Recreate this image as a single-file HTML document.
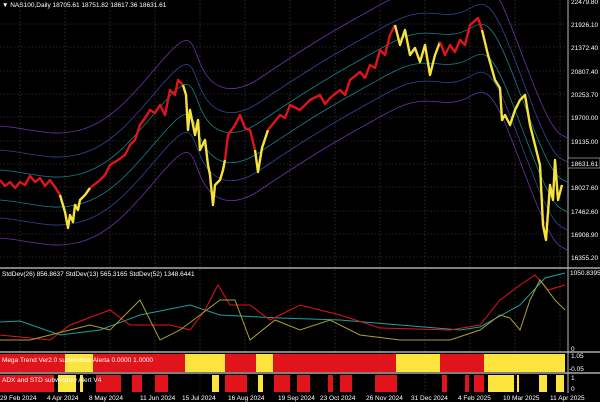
<!DOCTYPE html>
<html><head><meta charset="utf-8"><style>
html,body{margin:0;padding:0;background:#000;width:600px;height:402px;overflow:hidden}
svg{display:block}
text{font-family:"Liberation Sans",sans-serif;font-size:6.5px;fill:#fff}
</style></head><body>
<svg width="600" height="402" viewBox="0 0 600 402">
<defs>
<path id="mid" fill="none" d="M0,188 C30,190 50,200 80,192 S130,160 160,125 S190,100 200,125 S230,160 260,140 S320,100 360,78 S410,48 440,52 S475,35 488,45 S515,100 535,150 S560,195 567,200"/>
</defs>
<rect width="600" height="402" fill="#000"/>
<g stroke="#4a4a4a" stroke-width="0.6" stroke-dasharray="1.5,2">
<path d="M0,24H567M0,47H567M0,71H567M0,94H567M0,117H567M0,141H567M0,164H567M0,187H567M0,211H567M0,234H567M0,257H567"/>
<path d="M20,0V393M65,0V393M110,0V393M155,0V393M200,0V393M245,0V393M290,0V393M335,0V393M380,0V393M425,0V393M470,0V393M515,0V393M560,0V393"/>
</g>
<g fill="none" stroke-width="0.8">
<use href="#mid" stroke="#6a34a8" transform="translate(0,-62)"/>
<use href="#mid" stroke="#33449a" transform="translate(0,-38)"/>
<use href="#mid" stroke="#18808a" transform="translate(0,-18)"/>
<use href="#mid" stroke="#18808a" transform="translate(0,12)"/>
<use href="#mid" stroke="#33449a" transform="translate(0,30)"/>
<use href="#mid" stroke="#6a34a8" transform="translate(0,50)"/>
</g>
<g fill="none" stroke-width="2.4" stroke-linejoin="round">
<polyline stroke="#e0141a" points="0,180 5,186 10,182 15,188 20,182 25,185 30,176 35,182 40,178 45,186 50,180 55,187 60,195"/>
<polyline stroke="#f5e23c" points="60,195 65,212 68,228 70,215 73,222 75,205 78,210 80,200 85,195 90,188"/>
<polyline stroke="#e0141a" points="90,188 100,180 105,175 110,165 118,160 125,155 130,145 135,140 140,125 145,118 150,110 155,113 160,105 165,115 170,90 175,95 178,80 183,85"/>
<polyline stroke="#f5e23c" points="183,85 186,95 188,130 190,110 195,135 198,120 200,150 205,140 208,165 210,175 213,205 215,185 220,180 223,170 225,160"/>
<polyline stroke="#e0141a" points="225,160 228,135 235,125 240,115 245,128 250,130 255,150"/>
<polyline stroke="#f5e23c" points="255,150 258,172 262,148 268,130"/>
<polyline stroke="#e0141a" points="268,130 280,115 285,118 290,105 300,110 310,100 320,95 325,104 330,98 340,90 345,95 350,80 360,72 365,78 370,65 375,68 380,50 385,55 390,35 395,25"/>
<polyline stroke="#f5e23c" points="395,25 400,45 405,30 410,55 415,48 420,62 425,45 430,75 435,55 440,42"/>
<polyline stroke="#e0141a" points="440,42 445,55 450,45 455,52 460,40 465,45 470,25 478,18 482,30"/>
<polyline stroke="#f5e23c" points="482,30 488,55 490,62 495,80 500,88 502,120 505,115 510,125 515,110 520,100 525,95 530,125 535,145 540,165 543,225 546,240 550,185 553,200 555,160 558,200 562,185"/>
</g>
<text x="2" y="7">▼ NAS100,Daily  18705.61 18751.82 18617.36 18631.61</text>
<line x1="568" y1="0" x2="568" y2="393" stroke="#bbb" stroke-width="1"/>
<g>
<text x="571" y="4">22479.80</text><text x="571" y="27">21926.10</text><text x="571" y="50">21372.40</text>
<text x="571" y="74">20807.40</text><text x="571" y="97">20253.70</text><text x="571" y="120">19700.00</text>
<text x="571" y="144">19135.00</text>
<rect x="568" y="158" width="32" height="10" fill="#000" stroke="#ccc" stroke-width="0.6"/>
<text x="571" y="166">18631.61</text>
<text x="571" y="190">18027.60</text><text x="571" y="214">17462.60</text><text x="571" y="237">16908.90</text>
<text x="571" y="260">16355.20</text>
</g>
<g stroke="#aaa" stroke-width="1.5"><path d="M0,268H600M0,352H600M0,373H600"/></g>
<text x="2" y="276">StdDev(26) 856.8637  StdDev(13) 565.3165  StdDev(52) 1348.6441</text>
<text x="570" y="275">1050.8395</text>
<text x="571" y="351">0</text>
<g fill="none" stroke-width="1">
<polyline stroke="#1fa0a0" points="0,322 20,321 60,335 100,330 140,315 190,305 220,315 280,318 340,320 400,325 460,330 480,327 520,305 545,278 565,273"/>
<polyline stroke="#e0141a" points="0,335 50,340 70,325 110,310 130,325 170,325 190,330 205,310 218,285 230,305 250,305 270,320 300,305 340,315 380,328 450,330 480,325 500,300 520,285 535,275 548,290 565,285"/>
<polyline stroke="#a8a030" points="0,340 30,340 70,330 90,325 110,330 140,300 160,340 180,330 200,315 220,300 235,300 250,340 275,320 300,330 330,320 360,335 400,340 450,340 480,330 500,315 510,318 520,330 530,300 540,280 555,300 565,310"/>
</g>
<g>
<rect x="0" y="354" width="565" height="18" fill="#e0141a"/>
<rect x="65" y="354" width="28" height="18" fill="#fbe43c"/>
<rect x="185" y="354" width="40" height="18" fill="#fbe43c"/>
<rect x="256" y="354" width="17" height="18" fill="#fbe43c"/>
<rect x="396" y="354" width="44" height="18" fill="#fbe43c"/>
<rect x="484" y="354" width="81" height="18" fill="#fbe43c"/>
</g>
<text x="2" y="362">Mega Trend Ver2.0 subwindow Alerta 0.0000 1.0000</text>
<text x="571" y="358">1.05</text><text x="569" y="371">-0.05</text>
<g>
<rect x="0" y="375" width="54" height="17" fill="#e0141a"/>
<rect x="58" y="375" width="18" height="17" fill="#fbe43c"/>
<rect x="80" y="375" width="3" height="17" fill="#fbe43c"/>
<rect x="96" y="375" width="25" height="17" fill="#e0141a"/>
<rect x="132" y="375" width="10" height="17" fill="#e0141a"/>
<rect x="155" y="375" width="13" height="17" fill="#e0141a"/>
<rect x="212" y="375" width="7" height="17" fill="#fbe43c"/>
<rect x="225" y="375" width="22" height="17" fill="#e0141a"/>
<rect x="258" y="375" width="5" height="17" fill="#fbe43c"/>
<rect x="274" y="375" width="16" height="17" fill="#e0141a"/>
<rect x="297" y="375" width="13" height="17" fill="#e0141a"/>
<rect x="328" y="375" width="5" height="17" fill="#e0141a"/>
<rect x="340" y="375" width="12" height="17" fill="#e0141a"/>
<rect x="375" y="375" width="22" height="17" fill="#e0141a"/>
<rect x="442" y="375" width="5" height="17" fill="#e0141a"/>
<rect x="465" y="375" width="4" height="17" fill="#e0141a"/>
<rect x="474" y="375" width="10" height="17" fill="#e0141a"/>
<rect x="488" y="375" width="26" height="17" fill="#fbe43c"/>
<rect x="517" y="375" width="2" height="17" fill="#fbe43c"/>
<rect x="539" y="375" width="8" height="17" fill="#fbe43c"/>
<rect x="556" y="375" width="8" height="17" fill="#fbe43c"/>
</g>
<text x="2" y="382">ADX and STD subwindow Alert V4</text>
<text x="571" y="380">1</text><text x="571" y="391">0</text>
<g>
<text x="0" y="400">29 Feb 2024</text><text x="47" y="400">4 Apr 2024</text><text x="89" y="400">8 May 2024</text>
<text x="140" y="400">11 Jun 2024</text><text x="182" y="400">15 Jul 2024</text><text x="228" y="400">16 Aug 2024</text>
<text x="278" y="400">19 Sep 2024</text><text x="320" y="400">23 Oct 2024</text><text x="366" y="400">26 Nov 2024</text>
<text x="411" y="400">31 Dec 2024</text><text x="458" y="400">4 Feb 2025</text><text x="503" y="400">10 Mar 2025</text>
<text x="550" y="400">11 Apr 2025</text>
</g>
</svg>
</body></html>
